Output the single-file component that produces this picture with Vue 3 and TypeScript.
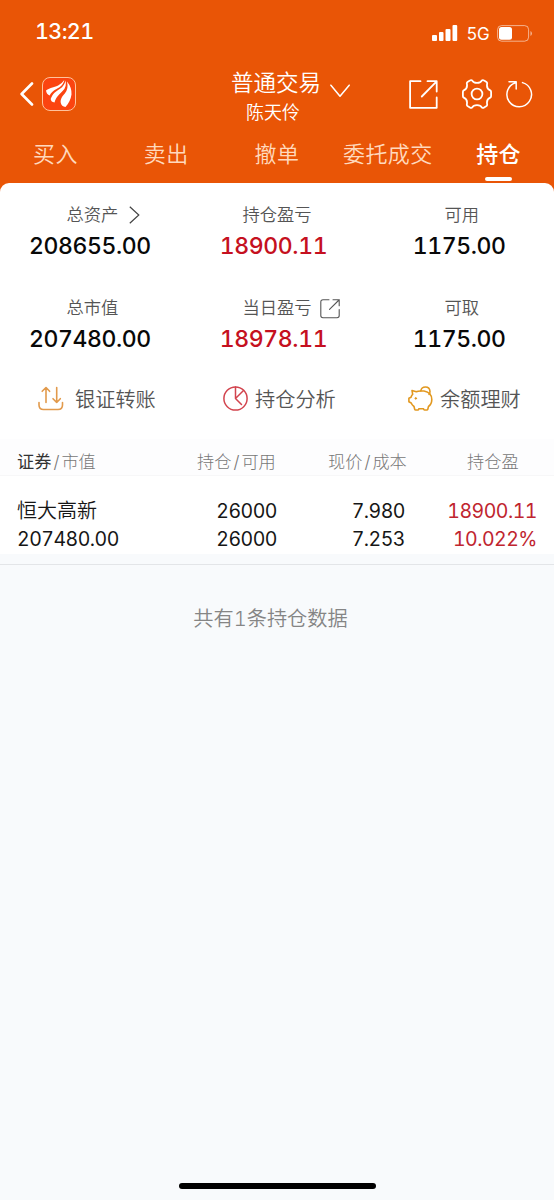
<script setup lang="ts">
interface Metric {
  label: string
  value: string
  gain?: boolean
  icon?: 'arrow' | 'share'
}

interface Holding {
  name: string
  marketValue: string
  held: string
  available: string
  price: string
  cost: string
  profit: string
  ratio: string
}

const tabs: string[] = ['买入', '卖出', '撤单', '委托成交', '持仓']
const activeTab = '持仓'

const metrics: Metric[] = [
  { label: '总资产', value: '208655.00', icon: 'arrow' },
  { label: '持仓盈亏', value: '18900.11', gain: true },
  { label: '可用', value: '1175.00' },
  { label: '总市值', value: '207480.00' },
  { label: '当日盈亏', value: '18978.11', gain: true, icon: 'share' },
  { label: '可取', value: '1175.00' },
]

const holdings: Holding[] = [
  {
    name: '恒大高新',
    marketValue: '207480.00',
    held: '26000',
    available: '26000',
    price: '7.980',
    cost: '7.253',
    profit: '18900.11',
    ratio: '10.022%',
  },
]
</script>

<template>
  <div class="screen">
    <header class="top">
      <div class="status">
        <span class="time">13:21</span>
        <div class="status-right">
          <svg class="signal" width="26" height="16" viewBox="0 0 26 16" fill="#fff">
            <rect x="0" y="10" width="5" height="6" rx="1" />
            <rect x="7" y="7" width="4.5" height="9" rx="1" />
            <rect x="13.5" y="4" width="5" height="12" rx="1" />
            <rect x="20.5" y="0" width="4.7" height="16" rx="1" />
          </svg>
          <span class="net">5G</span>
          <svg class="battery" width="36" height="17" viewBox="0 0 36 17" fill="none">
            <rect x="0.6" y="0.6" width="31" height="15.6" rx="4" stroke="#fff" stroke-opacity=".55" />
            <rect x="2" y="2" width="13" height="12.8" rx="2.5" fill="#fff" />
            <path d="M33.5 6v5q1.4-.6 1.4-2.5T33.500 6z" fill="#fff" fill-opacity=".6" />
          </svg>
        </div>
      </div>

      <div class="nav">
        <div class="nav-left">
          <svg width="14" height="24" viewBox="0 0 14 24" fill="none" stroke="#fff" stroke-width="2.6" stroke-linecap="round" stroke-linejoin="round">
            <path d="M12 1.500 1.600 12 12 22.500" />
          </svg>
          <svg class="logo" width="34" height="34" viewBox="0 0 34 34">
            <rect x="0.500" y="0.500" width="33" height="33" rx="7.500" fill="#fb4410" stroke="#ffc39c" />
            <g fill="#fff">
              <path d="M4 13.500C8 10.500 13 10.500 16.500 8.300Q20 6.300 22.300 3Q21.500 7.500 17.500 10.300C12.500 13.300 9.500 14.500 7.800 18.500Q4.500 17.500 4 13.500Z" />
              <path d="M8.700 22C10.500 16.500 14 14.300 18 11.700Q22.500 8.700 23.500 3.400Q25 9.500 20.800 13.800C17 17.800 14.200 19.800 12.500 25.500Q9 25 8.700 22Z" />
              <path d="M18.800 26C18 22 20.500 19 22.800 16.500Q26.800 11.500 25 4.400Q30 10.500 29.500 17.500Q28.500 24.500 23.500 30Q19.500 29.500 18.800 26Z" />
            </g>
          </svg>
        </div>
        <div class="account">
          <div class="account-title">
            <span>普通交易</span>
            <svg width="20" height="14" viewBox="0 0 20 14" fill="none" stroke="#fff" stroke-width="1.500" stroke-linecap="round" stroke-linejoin="round">
              <path d="M.9 1.200 10 12.300 19.200 1.200" />
            </svg>
          </div>
          <div class="account-user">陈天伶</div>
        </div>
        <div class="nav-right">
          <svg class="open" width="29" height="29" viewBox="0 0 29 29" fill="none" stroke="#fff" stroke-width="1.800" stroke-linecap="round" stroke-linejoin="round">
            <path d="M11.500 1.200H1.100V27.800H27.700V17.500M18.500 1.200H27.700V11.500M27.400 1.600 12.800 16.500" />
          </svg>
          <svg class="gear" width="30" height="30" viewBox="0 0 30 30" fill="none" stroke="#fff" stroke-width="1.800" stroke-linejoin="round">
            <path d="M10 1.300Q8.800.9 7.900 1.500L5.500 3Q4.600 3.700 4.900 4.900Q5.700 9.700 1.800 11.300Q.9 11.900.9 13V17Q.9 18.100 1.800 18.700Q5.700 20.300 4.900 25.100Q4.600 26.300 5.500 27L7.900 28.500Q8.800 29.100 10 28.700Q11.300 26.100 15 26.100T20 28.700Q21.200 29.100 22.100 28.500L24.500 27Q25.400 26.300 25.100 25.100Q24.300 20.300 28.200 18.700Q29.100 18.100 29.100 17V13Q29.100 11.900 28.200 11.300Q24.300 9.700 25.100 4.900Q25.400 3.700 24.500 3L22.100 1.500Q21.200.9 20 1.300Q18.700 3.900 15 3.900T10 1.300Z" />
            <circle cx="15" cy="15" r="5.400" />
          </svg>
          <svg class="refresh" width="27" height="28" viewBox="0 0 27 28" fill="none" stroke="#fff" stroke-width="1.500" stroke-linecap="round" stroke-linejoin="round">
            <path d="M16.500 2.600A12.300 12.300 0 1 1 9.600 2.700M3 1.800H10.200V9" />
          </svg>
        </div>
      </div>

      <nav class="tabs">
        <div v-for="tab in tabs" :key="tab" class="tab" :class="{ active: tab === activeTab }">
          <span>{{ tab }}</span>
          <i v-if="tab === activeTab" class="tab-line"></i>
        </div>
      </nav>
    </header>

    <main class="panel">
      <section class="metrics">
        <div v-for="m in metrics" :key="m.label" class="metric">
          <div class="metric-label">
            <span class="metric-name">
              {{ m.label }}
              <svg v-if="m.icon === 'arrow'" class="mark arrow" width="11" height="18" viewBox="0 0 11 18" fill="none" stroke="#444" stroke-width="1.200">
                <path d="M.8.800 9.800 9 .8 17.200" />
              </svg>
              <svg v-if="m.icon === 'share'" class="mark share" width="20" height="20" viewBox="0 0 20 20" fill="none" stroke="#555" stroke-width="1.100" stroke-linecap="round">
                <path d="M9 .8H3Q.8.800.8 3V16.500Q.8 18.700 3 18.700H17Q19.200 18.700 19.200 16.500V10.500M13 .8H19.200V6.800M19 1 9.500 10.300" />
              </svg>
            </span>
          </div>
          <div class="metric-value" :class="{ gain: m.gain }">{{ m.value }}</div>
        </div>
      </section>

      <section class="actions">
        <div class="action transfer">
          <svg width="26" height="25" viewBox="0 0 26 25" fill="none" stroke="#e29a4c" stroke-width="1.600" stroke-linecap="round" stroke-linejoin="round">
            <path d="M1 16.500V19Q1 23.500 5.500 23.500H20Q24.500 23.500 24.500 19V16.500M8 16.500V1.500M4.200 5.300 8 1.500 11.600 5.300M18.700 1.500V16.500M15 12.700 18.700 16.500 22.300 12.700" />
          </svg>
          <span>银证转账</span>
        </div>
        <div class="action analysis">
          <svg width="26" height="25" viewBox="0 0 26 25" fill="none" stroke="#d2444e" stroke-width="1.500" stroke-linecap="round" stroke-linejoin="round">
            <circle cx="12.500" cy="12.500" r="11.600" />
            <path d="M12.500 1V12.500L18.500 18.500M12.500 12.500 20.500 4.500" />
          </svg>
          <span>持仓分析</span>
        </div>
        <div class="action savings">
          <svg width="26" height="26" viewBox="0 0 26 26" fill="none" stroke="#e2981f" stroke-width="1.600" stroke-linecap="round" stroke-linejoin="round">
            <path d="M4 4.500 8.300 5.800Q10 5 12.500 5H16Q23.800 6.500 23.800 13.500Q23.800 18 20.500 20.500L19.800 23.200Q19.600 24 18.800 24H16.500Q15.800 24 15.500 22.800H10.800Q10.600 24 9.800 24H7.700Q6.900 24 6.700 23.200L6 20.500Q4 19 3.200 17L.9 15.800V12.200L3 11.200Q3.500 9.500 4.700 8.300Z" />
            <path d="M12.800 5Q13.300 1 17.500 1T22 5.500Q22 7.500 21 8.300" />
            <circle cx="7.800" cy="12.400" r=".8" fill="#e2981f" stroke-width="1" />
          </svg>
          <span>余额理财</span>
        </div>
      </section>

      <section class="table">
        <div class="table-head">
          <span class="first"><b>证券</b><i>/</i>市值</span>
          <span>持仓<i>/</i>可用</span>
          <span>现价<i>/</i>成本</span>
          <span class="last">持仓盈</span>
        </div>
        <div v-for="h in holdings" :key="h.name" class="table-row">
          <div class="cell first"><span class="name">{{ h.name }}</span><span>{{ h.marketValue }}</span></div>
          <div class="cell"><span>{{ h.held }}</span><span>{{ h.available }}</span></div>
          <div class="cell price"><span>{{ h.price }}</span><span>{{ h.cost }}</span></div>
          <div class="cell profit"><span>{{ h.profit }}</span><span>{{ h.ratio }}</span></div>
        </div>
      </section>
    </main>

    <div class="divider"></div>
    <p class="summary">共有1条持仓数据</p>
    <div class="home-bar"></div>
  </div>
</template>

<style>
html,
body {
  margin: 0;
  background: #f8fafc;
}
</style>

<style scoped>
.screen {
  display: flex;
  flex-direction: column;
  width: 554px;
  height: 1200px;
  overflow: hidden;
  background: #f8fafc;
  font-family: Inter, "Noto Sans CJK SC", sans-serif;
  font-weight: 350;
  font-variant-numeric: tabular-nums;
  color: #161616;
}
svg {
  display: block;
  flex: none;
}
.top {
  height: 195px;
  flex: none;
  background: #e95506;
  color: #fff;
}
.status {
  display: flex;
  justify-content: space-between;
  height: 65px;
  padding: 0 21px 0 35px;
  box-sizing: border-box;
}
.time {
  padding-top: 18px;
  font-size: 21.500px;
  line-height: 27px;
  font-weight: 500;
  letter-spacing: -.6px;
}
.status-right {
  display: flex;
  align-items: flex-start;
  padding-top: 25px;
}
.net {
  margin: -1px 8px 0 8px;
  font-size: 17px;
  line-height: 20px;
  font-weight: 400;
  letter-spacing: -.6px;
}
.nav {
  display: grid;
  grid-template-columns: 177px 200px 177px;
  height: 66px;
}
.nav-left {
  display: flex;
  align-items: center;
  height: 57px;
  padding-left: 20px;
  gap: 8px;
}
.account {
  padding-top: 3px;
}
.account-title {
  display: flex;
  align-items: center;
  gap: 9px;
  padding-left: 54px;
  height: 30px;
  font-size: 22.500px;
  line-height: 30px;
}
.account-title span {
  white-space: nowrap;
}
.account-title svg {
  margin-top: 16px;
}
.account-user {
  padding-left: 69px;
  font-size: 18px;
  line-height: 30px;
}
.nav-right {
  display: flex;
  align-items: center;
  height: 58px;
  padding-left: 32px;
}
.gear {
  margin-left: 24px;
}
.refresh {
  margin-left: 14px;
}
.tabs {
  display: grid;
  grid-template-columns: repeat(5, 1fr);
}
.tab {
  display: flex;
  flex-direction: column;
  align-items: center;
  font-size: 22px;
  line-height: 46px;
  color: #ffd9bd;
  white-space: nowrap;
}
.tab span {
  letter-spacing: .4px;
}
.tab.active {
  color: #fff;
  font-weight: 500;
}
.tab-line {
  width: 27px;
  height: 4px;
  border-radius: 2px;
  background: #fff;
}
.panel {
  margin-top: -12px;
  height: 371px;
  flex: none;
  border-radius: 9px 9px 0 0;
  background: #fff;
  overflow: hidden;
}
.metrics {
  display: grid;
  grid-template-columns: repeat(3, 1fr);
  padding-top: 16px;
  row-gap: 30px;
}
.metric {
  display: flex;
  flex-direction: column;
  align-items: center;
}
.metric-label {
  height: 32px;
  font-size: 17.300px;
  line-height: 31px;
  color: #555;
}
.metric-name {
  position: relative;
}
.mark {
  position: absolute;
}
.arrow {
  left: calc(100% + 11px);
  top: 2px;
}
.share {
  left: calc(100% + 8px);
  top: 2px;
}
.metric-value {
  margin-right: 5px;
  font-size: 23px;
  line-height: 31px;
  font-weight: 500;
  letter-spacing: -.4px;
  color: #080808;
}
.metric-value.gain {
  margin-right: 7px;
  color: #c51020;
}
.actions {
  display: grid;
  grid-template-columns: 223px 185px 1fr;
  height: 84px;
  padding-top: 9px;
  box-sizing: border-box;
}
.action {
  display: flex;
  align-items: center;
  height: 69px;
  gap: 6px;
  font-size: 20.200px;
  color: #555;
}
.action.transfer {
  padding-left: 38px;
  gap: 11px;
}
.table-head {
  display: grid;
  grid-template-columns: 197px 131px 139px 1fr;
  height: 37px;
  background: #fdfdfe;
  border-bottom: 1px solid #f7f7f8;
  box-sizing: border-box;
  font-size: 17.200px;
  line-height: 46px;
  font-weight: 300;
  color: #777;
}
.table-head i {
  margin: 0 2px;
  font-style: normal;
}
.table-head b {
  font-weight: 400;
  color: #333;
}
.first {
  padding-left: 17px;
}
.table-row {
  display: grid;
  grid-template-columns: 197px 80px 128px 132px;
  padding-top: 21px;
}
.cell {
  display: flex;
  flex-direction: column;
  align-items: flex-end;
  font-size: 19.500px;
  line-height: 28px;
  font-weight: 400;
  letter-spacing: -.5px;
}
.cell.first {
  align-items: flex-start;
}
.name {
  font-size: 20px;
  font-weight: 350;
  letter-spacing: 0;
}
.profit {
  color: #c0252f;
}
.divider {
  height: 10px;
  flex: none;
  border-bottom: 1px solid #e3e5e8;
}
.summary {
  margin: 39px 0 0;
  padding-right: 13px;
  text-align: center;
  font-size: 20.200px;
  line-height: 30px;
  color: #858585;
}
.home-bar {
  width: 197px;
  height: 6px;
  margin: auto auto 11px 179px;
  border-radius: 3px;
  background: #000;
}
</style>
